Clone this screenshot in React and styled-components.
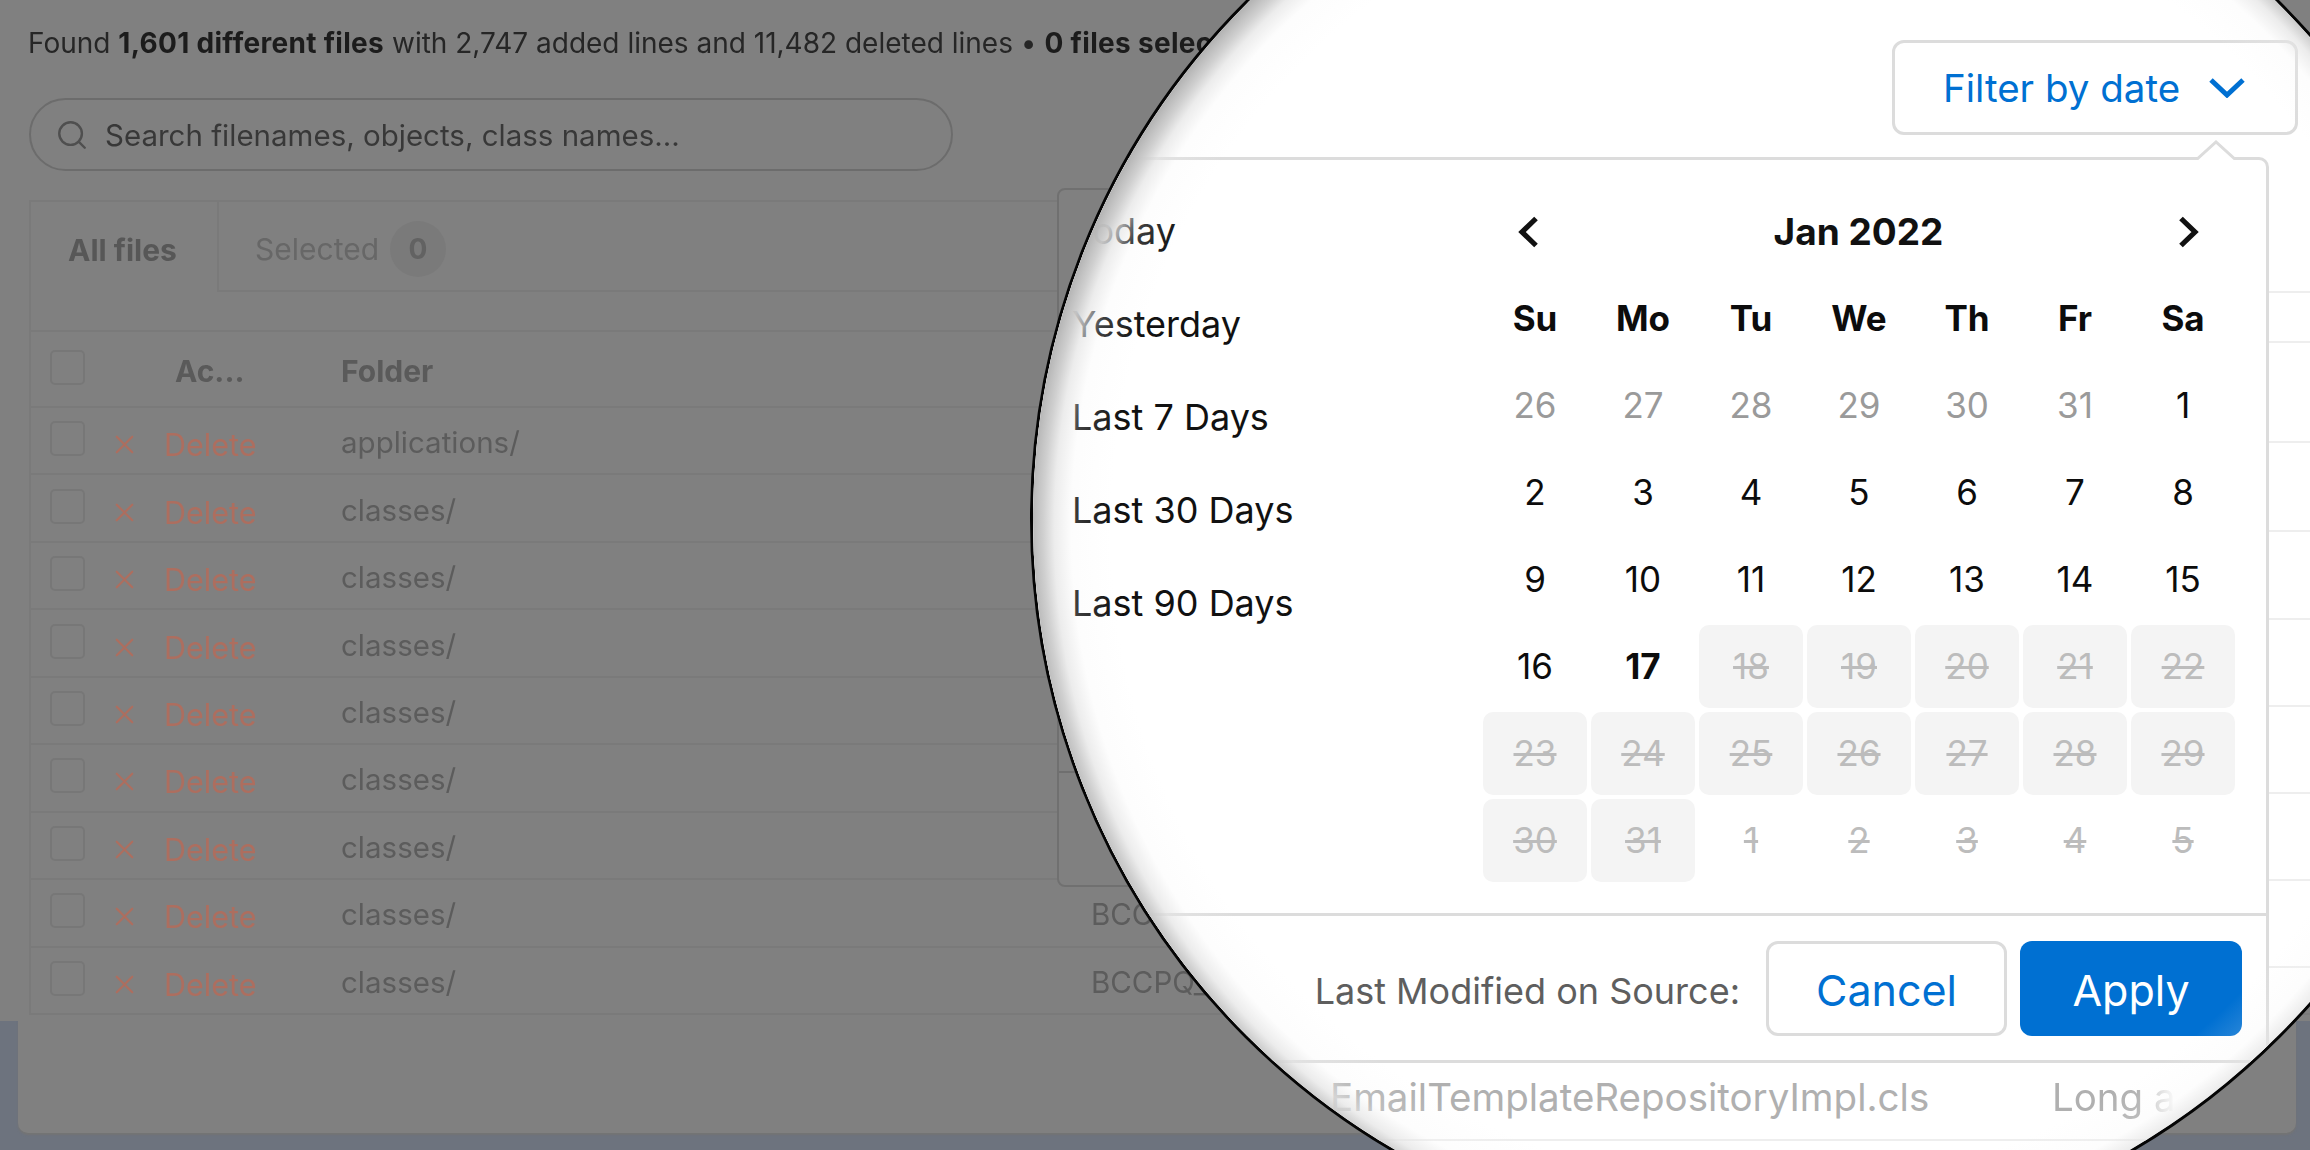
import * as React from "react";
import styled, { createGlobalStyle } from "styled-components";
import { Search, X } from "lucide-react";

const GlobalStyle = createGlobalStyle`
  html, body {
    margin: 0;
    padding: 0;
    width: 2310px;
    height: 1150px;
    overflow: hidden;
    font-family: Inter, "Liberation Sans", sans-serif;
  }
  * {
    box-sizing: border-box;
  }
`;

const colors = {
  dim: "#808080",
  dimLine: "#7a7a7a",
  dimText: "#5c5c5c",
  backdrop: "#6d737e",
  danger: "#ad6e5f",
  blue: "#0070d2",
  line: "#dcdcdc",
};

const Page = styled.div`
  position: relative;
  width: 2310px;
  height: 1150px;
  overflow: hidden;
  background: ${colors.backdrop};
`;

/* dimmed page behind the magnifier */
const Sheet = styled.div`
  position: relative;
  height: 1021px;
  background: ${colors.dim};
  filter: blur(0.6px);
`;

const CardFoot = styled.div`
  height: 112px;
  margin: 0 14px 0 18px;
  background: ${colors.dim};
  border-radius: 0 0 10px 10px;
  box-shadow: 0 2px 2px #747474;
`;

const Summary = styled.div`
  height: 86px;
  padding-left: 28px;
  display: flex;
  align-items: center;
  font-size: 28px;
  white-space: pre;
  color: #262626;
`;

const Strong = styled.strong`
  font-weight: 700;
  letter-spacing: 0.3px;
  color: #1c1c1c;
`;

const SearchBar = styled.div`
  width: 924px;
  height: 73px;
  margin: 12px 0 29px 29px;
  padding-left: 24px;
  display: flex;
  align-items: center;
  gap: 16px;
  border: 2px solid #6c6c6c;
  border-radius: 37px;
  font-size: 29.5px;
  color: #383838;

  svg {
    color: #4f4f4f;
  }
`;

const FilesPanel = styled.div`
  margin-left: 29px;
  border-left: 2px solid ${colors.dimLine};
  border-top: 2px solid ${colors.dimLine};
`;

const Tabs = styled.div`
  height: 90px;
  display: flex;
  align-items: stretch;
`;

const ActiveTab = styled.div`
  width: 188px;
  padding: 5px 0 0 37px;
  display: flex;
  align-items: center;
  border-right: 2px solid ${colors.dimLine};
  font-size: 30px;
  font-weight: 700;
  color: #575757;
`;

const IdleTab = styled.div`
  flex: 1;
  padding: 5px 0 0 36px;
  display: flex;
  align-items: center;
  gap: 11px;
  border-bottom: 2px solid ${colors.dimLine};
  font-size: 30px;
  color: #676767;
`;

const CountBadge = styled.span`
  width: 56px;
  height: 56px;
  border-radius: 50%;
  background: #7a7a7a;
  display: flex;
  align-items: center;
  justify-content: center;
  font-weight: 700;
  font-size: 28px;
  color: #626262;
`;

const TabGap = styled.div`
  height: 40px;
  border-bottom: 2px solid ${colors.dimLine};
`;

const Row = styled.div`
  display: grid;
  grid-template-columns: 85px 225px 750px 1fr;
  align-items: center;
  height: ${(props) => (props.$head ? "76px" : "67.45px")};
  border-bottom: 2px solid ${colors.dimLine};
  font-size: 29.5px;
  color: ${colors.dimText};
`;

const CheckCell = styled.div`
  padding-left: 19px;
  margin-top: -4px;
`;

const Checkbox = styled.div`
  width: 35px;
  height: 35px;
  border: 2px solid #777777;
  border-radius: 5px;
`;

const HeadCell = styled.div`
  padding-left: ${(props) => props.$inset || 0}px;
  margin-top: 3px;
  font-size: 30px;
  font-weight: 700;
  color: #5a5a5a;
`;

const DeleteAction = styled.div`
  display: flex;
  align-items: center;
  gap: 24px;
  margin: 8px 0 0 -7px;
  font-size: 30.5px;
  color: ${colors.danger};
`;

const Cell = styled.div`
  margin-top: 3px;
`;

const PreviewPanel = styled.div`
  position: absolute;
  left: 1057px;
  top: 188px;
  width: 700px;
  height: 699px;
  background: ${colors.dim};
  border: 2px solid #707070;
  border-radius: 8px;
`;

const PreviewHead = styled.div`
  height: 583px;
  border-bottom: 2px solid #6f6f6f;
`;

/* the magnifier */
const Lens = styled.div`
  position: absolute;
  left: 1030px;
  top: -213px;
  width: 1465px;
  height: 1465px;
  border: 3px solid #050505;
  border-radius: 50%;
  overflow: hidden;
  background: #fff;
  color: #111;

  &::after {
    content: "";
    position: absolute;
    inset: 0;
    pointer-events: none;
    background: radial-gradient(
      circle 741px at 50.6% 50.6%,
      rgba(255, 255, 255, 0) 660px,
      rgba(244, 244, 244, 0.2) 700px,
      rgba(228, 228, 228, 0.7) 717px,
      rgba(205, 205, 205, 0.95) 728px,
      rgba(180, 180, 180, 1) 741px
    );
  }
`;

const ZoomedLines = styled.div`
  position: absolute;
  right: 0;
  top: 382px;
  width: 223px;
`;

const ZoomedLine = styled.div`
  border-bottom: 2px solid #eeeeee;
`;

const FilterBar = styled.div`
  display: flex;
  justify-content: flex-end;
  padding: 250px 194px 0 0;
`;

const FilterButton = styled.div`
  width: 406px;
  height: 95px;
  padding: 0 50px 0 48px;
  display: flex;
  align-items: center;
  justify-content: space-between;
  border: 3px solid ${colors.line};
  border-radius: 12px;
  color: ${colors.blue};
  background: #fff;
  font-size: 38.5px;
`;

const Popover = styled.div`
  position: relative;
  margin: 22px 223px 0 0;
  background: #fff;
  border: 3px solid ${colors.line};
  border-left: 0;
  border-radius: 0 10px 0 0;
`;

const PopoverArrow = styled.svg`
  position: absolute;
  right: 29px;
  top: -20px;
  display: block;
`;

const PopoverBody = styled.div`
  display: flex;
  height: 756px;
  border-bottom: 3px solid ${colors.line};
`;

const Presets = styled.div`
  width: 450px;
  padding: 24px 0 0 39px;
`;

const Preset = styled.div`
  height: 93px;
  display: flex;
  align-items: center;
  font-size: 36px;
`;

const Calendar = styled.div`
  width: 754px;
  padding-top: 30px;
`;

const CalendarHead = styled.div`
  height: 83px;
  padding: 0 38px 0 35px;
  display: flex;
  align-items: center;
  justify-content: space-between;
  font-size: 37px;
  font-weight: 700;
`;

const Days = styled.div`
  margin-top: 4px;
  display: grid;
  grid-template-columns: repeat(7, 104px);
  grid-auto-rows: 83px;
  gap: 4px;
`;

const Day = styled.div`
  padding-bottom: 2px;
  display: flex;
  align-items: center;
  justify-content: center;
  border-radius: 10px;
  font-size: 35px;
  font-weight: ${(props) => (props.$bold ? 700 : 400)};
  color: ${(props) => (props.$muted ? "#9a9a9a" : props.$off ? "#bcbcbc" : "#0c0c0c")};
  background: ${(props) => (props.$filled ? "#f4f4f4" : "transparent")};
  text-decoration: ${(props) => (props.$off ? "line-through" : "none")};
`;

const PopoverFoot = styled.div`
  height: 144px;
  padding: 0 24px 0 0;
  display: flex;
  align-items: center;
  justify-content: flex-end;
`;

const FootLabel = styled.div`
  margin: 6px 26px 0 0;
  font-size: 36px;
  color: #5e5e5e;
`;

const Button = styled.div`
  height: 95px;
  padding-top: 4px;
  display: flex;
  align-items: center;
  justify-content: center;
  border-radius: 12px;
  font-size: 43px;
`;

const CancelButton = styled(Button)`
  width: 241px;
  margin-right: 13px;
  border: 3px solid ${colors.line};
  color: ${colors.blue};
`;

const ApplyButton = styled(Button)`
  width: 222px;
  background: ${colors.blue};
  color: #fff;
`;

const ZoomedRow = styled.div`
  height: 78px;
  padding: 0 0 8px 297px;
  display: flex;
  align-items: center;
  border-bottom: 2px solid #eeeeee;
  color: #b0b0b0;
  font-size: 38.5px;
`;

const ZoomedName = styled.div`
  width: 722px;
`;

const ZoomedKind = styled.div`
  mask-image: linear-gradient(90deg, #000 70%, transparent 100%);
`;

const ChevronDownIcon = () => (
  <svg width="36" height="21" viewBox="0 0 36 21" fill="none">
    <path d="M2 3l16 15L34 3" stroke="currentColor" strokeWidth="5" />
  </svg>
);

const ChevronSideIcon = ({ flip }) => (
  <svg width="22" height="32" viewBox="0 0 22 32" fill="none">
    <path
      d={flip ? "M4 2.5L18 16 4 29.5" : "M18 2.5L4 16l14 13.5"}
      stroke="#111"
      strokeWidth="5.2"
    />
  </svg>
);

const folders = ["applications/", ...Array(8).fill("classes/")];
const classNames = ["", "", "", "", "", "", "", "BCCPQ_", "BCCPQ_"];
const presets = ["Today", "Yesterday", "Last 7 Days", "Last 30 Days", "Last 90 Days"];
const weekDays = ["Su", "Mo", "Tu", "We", "Th", "Fr", "Sa"];
const lineGaps = [121, 50, 100, 89, 88, 87, 87, 87, 87];

const calendarDays = [
  ...[26, 27, 28, 29, 30, 31].map((n) => ({ n, muted: true })),
  ...Array.from({ length: 17 }, (_, i) => ({ n: i + 1, bold: i === 16 })),
  ...Array.from({ length: 14 }, (_, i) => ({ n: i + 18, off: true, filled: true })),
  ...[1, 2, 3, 4, 5].map((n) => ({ n, off: true })),
];

const App = () => (
  <Page>
    <GlobalStyle />
    <Sheet>
      <Summary>
        Found <Strong>1,601 different files</Strong> with 2,747 added lines and 11,482 deleted lines
        {" • "}
        <Strong>0 files selected</Strong>
      </Summary>
      <SearchBar>
        <Search size={34} strokeWidth={1.7} />
        Search filenames, objects, class names...
      </SearchBar>
      <FilesPanel>
        <Tabs>
          <ActiveTab>All files</ActiveTab>
          <IdleTab>
            Selected <CountBadge>0</CountBadge>
          </IdleTab>
        </Tabs>
        <TabGap />
        <Row $head>
          <CheckCell>
            <Checkbox />
          </CheckCell>
          <HeadCell $inset={59}>Ac...</HeadCell>
          <HeadCell>Folder</HeadCell>
        </Row>
        {folders.map((folder, i) => (
          <Row key={i}>
            <CheckCell>
              <Checkbox />
            </CheckCell>
            <DeleteAction>
              <X size={31} strokeWidth={1.7} />
              Delete
            </DeleteAction>
            <Cell>{folder}</Cell>
            <Cell>{classNames[i]}</Cell>
          </Row>
        ))}
      </FilesPanel>
      <PreviewPanel>
        <PreviewHead />
      </PreviewPanel>
    </Sheet>
    <CardFoot />

    <Lens>
      <ZoomedLines>
        {lineGaps.map((gap, i) => (
          <ZoomedLine key={i} style={{ height: gap }} />
        ))}
      </ZoomedLines>
      <FilterBar>
        <FilterButton>
          Filter by date
          <ChevronDownIcon />
        </FilterButton>
      </FilterBar>
      <Popover>
        <PopoverArrow width="42" height="20" viewBox="0 0 42 20">
          <path d="M1 20L21 2l20 18" fill="#fff" stroke={colors.line} strokeWidth="3" />
        </PopoverArrow>
        <PopoverBody>
          <Presets>
            {presets.map((preset) => (
              <Preset key={preset}>{preset}</Preset>
            ))}
          </Presets>
          <Calendar>
            <CalendarHead>
              <ChevronSideIcon />
              Jan 2022
              <ChevronSideIcon flip />
            </CalendarHead>
            <Days>
              {weekDays.map((day) => (
                <Day key={day} $bold>
                  {day}
                </Day>
              ))}
              {calendarDays.map((day, i) => (
                <Day key={i} $muted={day.muted} $bold={day.bold} $off={day.off} $filled={day.filled}>
                  {day.n}
                </Day>
              ))}
            </Days>
          </Calendar>
        </PopoverBody>
        <PopoverFoot>
          <FootLabel>Last Modified on Source:</FootLabel>
          <CancelButton>Cancel</CancelButton>
          <ApplyButton>Apply</ApplyButton>
        </PopoverFoot>
      </Popover>
      <ZoomedRow>
        <ZoomedName>EmailTemplateRepositoryImpl.cls</ZoomedName>
        <ZoomedKind>Long a</ZoomedKind>
      </ZoomedRow>
    </Lens>
  </Page>
);

export default App;
